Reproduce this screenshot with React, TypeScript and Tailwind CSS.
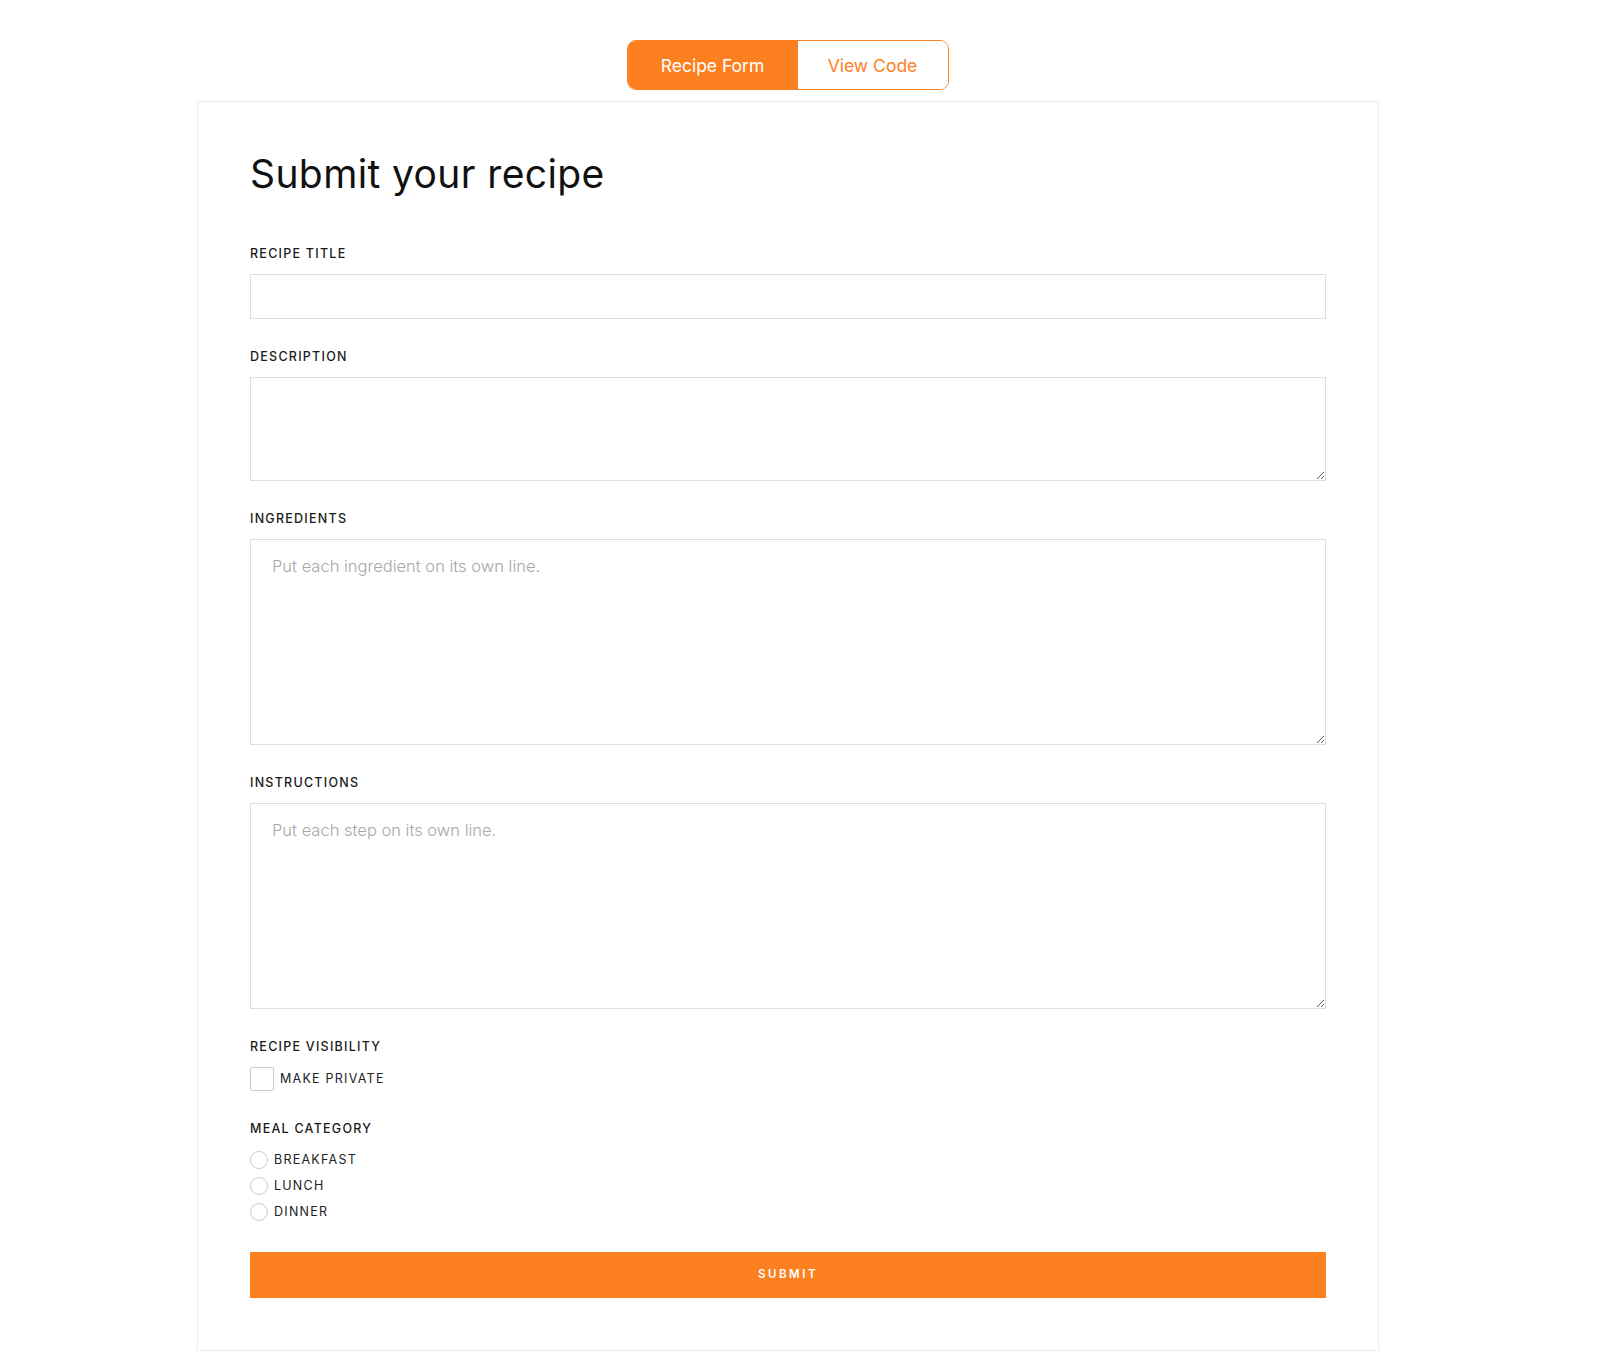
import { useState } from 'react';

const font = { fontFamily: 'Inter, "Noto Sans", sans-serif' };

function Label({ children }: { children: React.ReactNode }) {
  return (
    <label className="block text-[12.5px] font-medium tracking-[0.1em] text-[#1a1a1a] leading-4 mb-[12px]">
      {children}
    </label>
  );
}

const fieldCls =
  'block w-full border border-[#dddddd] rounded-none bg-white px-[21px] py-[14px] text-[16.5px] font-light text-[#333] placeholder:text-[#a8a8a8] outline-none';

export default function App() {
  const [tab, setTab] = useState<'form' | 'code'>('form');
  const meals = ['BREAKFAST', 'LUNCH', 'DINNER'];

  return (
    <div className="min-h-screen bg-white pl-[197px] pt-[40px] pb-[3px]" style={font}>
      <div className="w-[1182px] flex flex-col items-center">
        <div className="flex h-[50px] border border-[#fc801f] rounded-[9px] overflow-hidden ml-[-1px]">
          <button
            onClick={() => setTab('form')}
            className={`w-[170px] pt-[3px] text-[17.5px] font-normal ${tab === 'form' ? 'bg-[#fc801f] text-white' : 'bg-white text-[#fc801f]'}`}
          >
            Recipe Form
          </button>
          <button
            onClick={() => setTab('code')}
            className={`w-[150px] pt-[3px] text-[17.5px] font-normal ${tab === 'code' ? 'bg-[#fc801f] text-white' : 'bg-white text-[#fc801f]'}`}
          >
            View Code
          </button>
        </div>

        <div className="mt-[11px] w-full border border-[#ececec] shadow-[0_0_3px_rgba(0,0,0,0.04)] px-[52px] pt-[48px] pb-[52px]">
          <h1 className="text-[39px] font-normal text-[#111] leading-[48px] tracking-[0.01em] mb-[48px]">
            Submit your recipe
          </h1>

          <div className="mb-[30px]">
            <Label>RECIPE TITLE</Label>
            <input type="text" className={`${fieldCls} h-[45px]`} />
          </div>

          <div className="mb-[30px]">
            <Label>DESCRIPTION</Label>
            <textarea className={`${fieldCls} h-[104px] resize-y`} />
          </div>

          <div className="mb-[30px]">
            <Label>INGREDIENTS</Label>
            <textarea
              className={`${fieldCls} h-[206px] resize-y`}
              placeholder="Put each ingredient on its own line."
            />
          </div>

          <div className="mb-[30px]">
            <Label>INSTRUCTIONS</Label>
            <textarea
              className={`${fieldCls} h-[206px] resize-y`}
              placeholder="Put each step on its own line."
            />
          </div>

          <div className="mb-[30px]">
            <Label>RECIPE VISIBILITY</Label>
            <label className="flex items-center gap-[6px] mt-[1px]">
              <input
                type="checkbox"
                className="appearance-none w-[24px] h-[24px] border border-[#cccccc] rounded-[2px] bg-white checked:bg-[#fc801f] checked:border-[#fc801f]"
              />
              <span className="text-[12.5px] font-normal tracking-[0.1em] text-[#222]">MAKE PRIVATE</span>
            </label>
          </div>

          <div className="mb-[31px]">
            <Label>MEAL CATEGORY</Label>
            <div className="flex flex-col gap-[8px] pt-[2px]">
              {meals.map((m) => (
                <label key={m} className="flex items-center gap-[6px] h-[18px]">
                  <input
                    type="radio"
                    name="meal"
                    className="appearance-none w-[18px] h-[18px] rounded-full border border-[#cccccc] bg-white checked:border-[5px] checked:border-[#fc801f]"
                  />
                  <span className="text-[12.5px] font-normal tracking-[0.1em] text-[#222]">{m}</span>
                </label>
              ))}
            </div>
          </div>

          <button className="w-full h-[46px] bg-[#fc801f] text-white text-[11.5px] font-semibold tracking-[0.22em]">
            SUBMIT
          </button>
        </div>
      </div>
    </div>
  );
}
